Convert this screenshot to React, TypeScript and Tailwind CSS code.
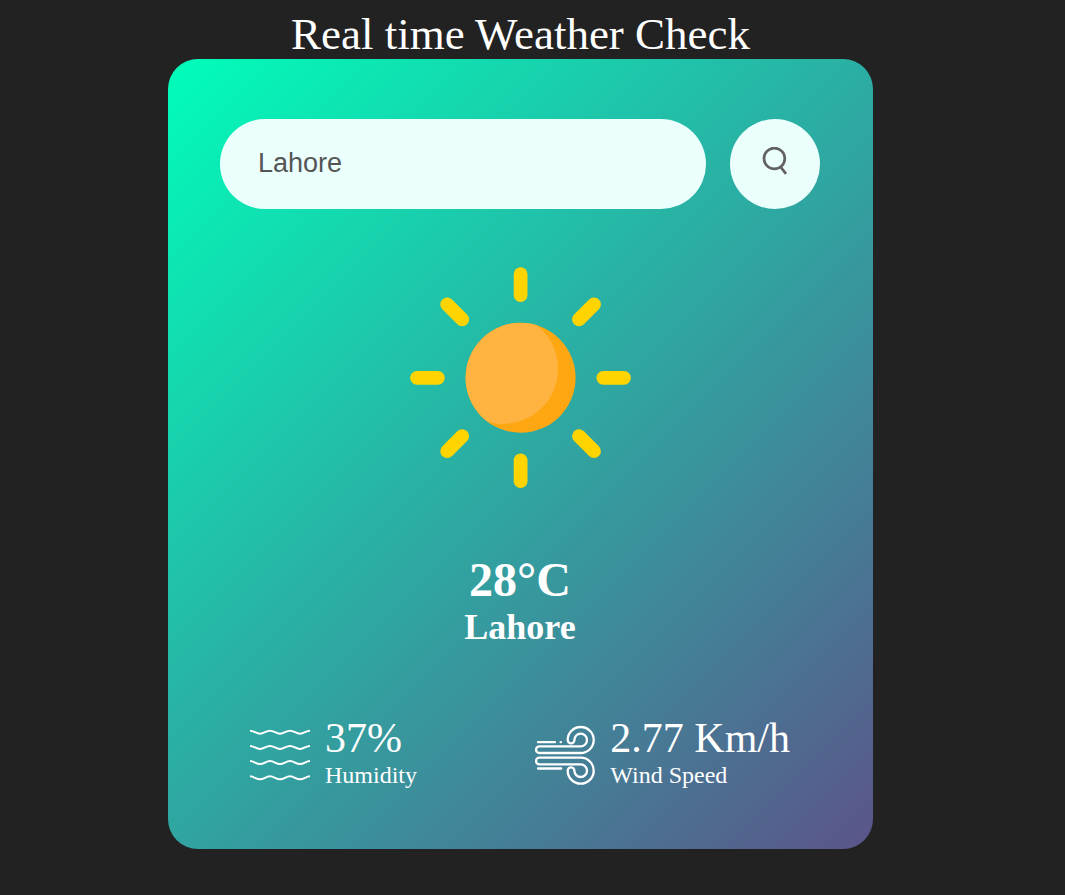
import { useState } from "react";

function SearchIcon() {
  return (
    <svg className="h-[34px] w-[26px]" viewBox="0 0 26 34" fill="none" stroke="#626262" strokeWidth="2.7" aria-hidden="true">
      <circle cx="12.4" cy="11.5" r="10.4" />
      <path d="M18 19.2 24 26.8" />
    </svg>
  );
}

function SunIcon() {
  return (
    <svg className="h-[222px] w-[222px]" viewBox="-0.8 0 222 222" role="img" aria-label="Clear sky">
      <defs>
        <clipPath id="sun-disc">
          <circle cx="110.8" cy="110.8" r="55" />
        </clipPath>
      </defs>
      <circle cx="110.8" cy="110.8" r="55" fill="#ffa613" />
      <circle cx="93" cy="101.8" r="55.2" fill="#ffb341" clipPath="url(#sun-disc)" />
      <g stroke="#ffd400" strokeWidth="13.8" strokeLinecap="round">
        <path d="M110.8 7.2V28.1" />
        <path d="M110.8 193.5V214.2" />
        <path d="M7.2 110.8H28.1" />
        <path d="M193.5 110.8H214.2" />
        <path d="M37.4 37.4 52.4 52.4" />
        <path d="M184.2 37.4 169.2 52.4" />
        <path d="M37.4 184.2 52.4 169.2" />
        <path d="M184.2 184.2 169.2 169.2" />
      </g>
    </svg>
  );
}

const wave = "c4 0 6 3 10 3s6-3 10-3s6 3 10 3s6-3 10-3s6 3 10 3s6-3 10-3";

function HumidityIcon() {
  return (
    <svg className="mt-[11px] h-[60px] w-[60px] shrink-0" viewBox="0 0 60 60" fill="none" stroke="#fff" strokeWidth="2" aria-hidden="true">
      <path d={`M0 5.7${wave}`} />
      <path d={`M0 20.9${wave}`} />
      <path d={`M0 36.1${wave}`} />
      <path d={`M0 51.3${wave}`} />
    </svg>
  );
}

function WindIcon() {
  const curl =
    "M4.4 21.3H45.7A6.3 6.3 0 1 0 39.4 15a3.35 3.35 0 0 1-6.7 0A13 13 0 1 1 45.7 28H4.4a3.35 3.35 0 0 1 0-6.7z";
  return (
    <svg
      className="mt-[11px] h-[60px] w-[60px] shrink-0"
      viewBox="0 0 60 60"
      fill="none"
      stroke="#fff"
      strokeWidth="2.3"
      strokeLinecap="round"
      aria-hidden="true"
    >
      <path d={curl} />
      <path d={curl} transform="matrix(1 0 0 -1 0 60.7)" />
      <path d="M3 17.2H20" />
      <path d="M25.6 17.2H25.9" />
      <path d="M3 43.5H26.2" />
    </svg>
  );
}

export default function App() {
  const [city, setCity] = useState("Lahore");

  return (
    <div className="min-h-screen bg-[#222] pt-[10px] pr-6 pb-6 font-['Liberation_Serif',serif] text-white">
      <h1 className="text-center text-[45px] leading-[49px]">Real time Weather Check</h1>
      <main className="mx-auto max-w-[705px] rounded-[30px] bg-[linear-gradient(135deg,#00feba,#5b548a)] py-[60px] pr-[53px] pl-[52px]">
        <form className="flex gap-6" onSubmit={(e) => e.preventDefault()}>
          <input
            type="text"
            aria-label="City"
            value={city}
            onChange={(e) => setCity(e.target.value)}
            className="h-[90px] min-w-0 flex-1 rounded-full bg-[#ebfffc] px-[38px] pb-0.5 font-['Liberation_Sans',sans-serif] text-[27px] text-[#555] outline-none"
          />
          <button
            type="submit"
            aria-label="Search"
            className="flex h-[90px] w-[90px] shrink-0 items-center justify-center rounded-full bg-[#ebfffc]"
          >
            <SearchIcon />
          </button>
        </form>

        <section className="flex flex-col items-center pt-[58px]">
          <SunIcon />
          <p className="mt-[63px] text-5xl leading-[55px] font-bold">28°C</p>
          <h2 className="text-4xl leading-[41px] font-bold">Lahore</h2>
        </section>

        <section className="mt-[66px] flex justify-between px-[30px]">
          <div className="flex gap-[15px]">
            <HumidityIcon />
            <div>
              <p className="text-[42px] leading-[48px]">37%</p>
              <p className="text-2xl leading-[27px]">Humidity</p>
            </div>
          </div>
          <div className="flex gap-[15px]">
            <WindIcon />
            <div>
              <p className="text-[42px] leading-[48px]">2.77 Km/h</p>
              <p className="text-2xl leading-[27px]">Wind Speed</p>
            </div>
          </div>
        </section>
      </main>
    </div>
  );
}
